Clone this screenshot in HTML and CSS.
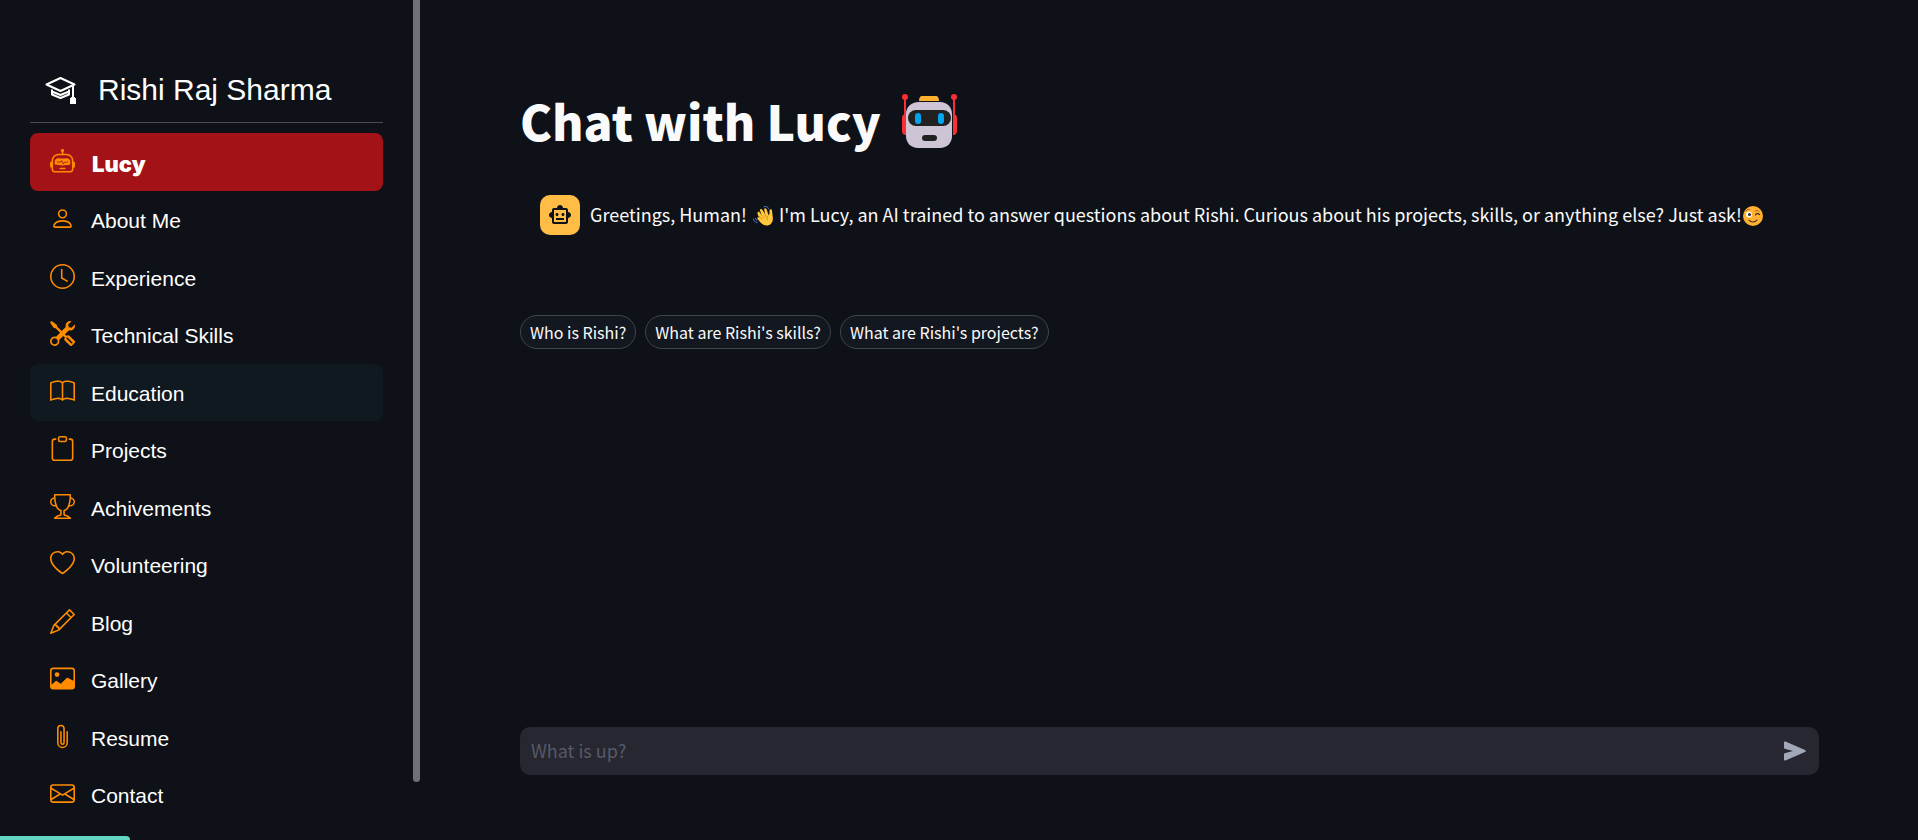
FILE: index.html
```html
<!DOCTYPE html>
<html lang="en">
<head>
<meta charset="utf-8">
<meta name="viewport" content="width=device-width, initial-scale=1">
<title>Chat with Lucy</title>
<link rel="stylesheet" href="styles.css">
</head>
<body>
<div class="app">
  <aside class="sidebar">
    <div class="sidebar-content">
      <header class="profile">
        <svg class="profile-icon" viewBox="0 0 31 31" aria-hidden="true">
          <g fill="none" stroke="currentColor" stroke-width="2" stroke-linejoin="round">
            <path d="M1.500 9.500 15.500 3 29.500 9.500 15.500 16z"/>
            <path d="M7 14.500v5l8.500 3.500 8.500-3.500v-5M7 16.500l8.500 3.500 8.500-3.500"/>
            <path d="M28 10v13"/>
          </g>
          <path fill="currentColor" d="M26 22h4v1h1v6h-6v-6h1z"/>
        </svg>
        <span class="profile-name">Rishi Raj Sharma</span>
      </header>
      <nav aria-label="Sections">
        <ul class="menu">
          <li><a class="menu-link active" href="#lucy" aria-current="page"><svg class="menu-icon" viewBox="0 0 16 16" aria-hidden="true"><path d="M6 12.500a.5.5 0 0 1 .5-.5h3a.5.5 0 0 1 0 1h-3a.5.5 0 0 1-.5-.5M3 8.062C3 6.760 4.235 5.765 5.530 5.886a26.600 26.600 0 0 0 4.940 0C11.765 5.765 13 6.760 13 8.062v1.157a.93.93 0 0 1-.765.935c-.845.147-2.340.346-4.235.346s-3.390-.2-4.235-.346A.93.93 0 0 1 3 9.219zm4.542-.827a.25.25 0 0 0-.217.068l-.92.9a25 25 0 0 1-1.871-.183.25.25 0 0 0-.068.495c.55.076 1.232.149 2.020.193a.25.25 0 0 0 .189-.071l.754-.736.847 1.710a.25.25 0 0 0 .404.062l.932-.97a25 25 0 0 0 1.922-.188.25.25 0 0 0-.068-.495c-.538.074-1.207.145-1.980.189a.25.25 0 0 0-.166.076l-.754.785-.842-1.700a.25.25 0 0 0-.182-.135"/><path d="M8.500 1.866a1 1 0 1 0-1 0V3h-2A4.500 4.500 0 0 0 1 7.500V8a1 1 0 0 0-1 1v2a1 1 0 0 0 1 1v1a2 2 0 0 0 2 2h10a2 2 0 0 0 2-2v-1a1 1 0 0 0 1-1V9a1 1 0 0 0-1-1v-.5A4.500 4.500 0 0 0 10.500 3h-2zM14 7.500V13a1 1 0 0 1-1 1H3a1 1 0 0 1-1-1V7.500A3.500 3.500 0 0 1 5.500 4h5A3.500 3.500 0 0 1 14 7.500"/></svg><span class="active-label">Lucy</span></a></li>
          <li><a class="menu-link" href="#about"><svg class="menu-icon" viewBox="0 0 16 16" aria-hidden="true"><path d="M8 8a3 3 0 1 0 0-6 3 3 0 0 0 0 6m2-3a2 2 0 1 1-4 0 2 2 0 0 1 4 0m4 8c0 1-1 1-1 1H3s-1 0-1-1 1-4 6-4 6 3 6 4m-1-.004c-.001-.246-.154-.986-.832-1.664C11.516 10.680 10.289 10 8 10s-3.516.68-4.168 1.332c-.678.678-.83 1.418-.832 1.664z"/></svg>About Me</a></li>
          <li><a class="menu-link" href="#experience"><svg class="menu-icon" viewBox="0 0 16 16" aria-hidden="true"><path d="M8 3.500a.5.5 0 0 0-1 0V9a.5.5 0 0 0 .252.434l3.500 2a.5.5 0 0 0 .496-.868L8 8.710z"/><path d="M8 16A8 8 0 1 0 8 0a8 8 0 0 0 0 16m7-8A7 7 0 1 1 1 8a7 7 0 0 1 14 0"/></svg>Experience</a></li>
          <li><a class="menu-link" href="#skills"><svg class="menu-icon" viewBox="0 0 16 16" aria-hidden="true"><path d="M1 0 0 1l2.200 3.081a1 1 0 0 0 .815.419h.07a1 1 0 0 1 .708.293l2.675 2.675-2.617 2.654A3.003 3.003 0 0 0 0 13a3 3 0 1 0 5.878-.851l2.654-2.617.968.968-.305.914a1 1 0 0 0 .242 1.023l3.270 3.270a.997.997 0 0 0 1.414 0l1.586-1.586a.997.997 0 0 0 0-1.414l-3.270-3.270a1 1 0 0 0-1.023-.242L10.500 9.500l-.96-.96 2.680-2.643A3.005 3.005 0 0 0 16 3q0-.405-.102-.777l-2.140 2.141L12 4l-.364-1.757L13.777.102a3 3 0 0 0-3.675 3.680L7.462 6.460 4.793 3.793a1 1 0 0 1-.293-.707v-.071a1 1 0 0 0-.419-.814zm9.646 10.646a.5.5 0 0 1 .708 0l2.914 2.915a.5.5 0 0 1-.707.707l-2.915-2.914a.5.5 0 0 1 0-.708M3 11l.471.242.529.026.287.445.445.287.026.529L5 13l-.242.471-.026.529-.445.287-.287.445-.529.026L3 15l-.471-.242L2 14.732l-.287-.445L1.268 14l-.026-.529L1 13l.242-.471.026-.529.445-.287.287-.445.529-.026z"/></svg>Technical Skills</a></li>
          <li><a class="menu-link hovered" href="#education"><svg class="menu-icon" viewBox="0 0 16 16" aria-hidden="true"><path d="M1 2.828c.885-.37 2.154-.769 3.388-.893 1.330-.134 2.458.063 3.112.752v9.746c-.935-.53-2.120-.603-3.213-.493-1.180.12-2.370.461-3.287.811zm7.500-.141c.654-.689 1.782-.886 3.112-.752 1.234.124 2.503.523 3.388.893v9.923c-.918-.35-2.107-.692-3.287-.81-1.094-.111-2.278-.039-3.213.492zM8 1.783C7.015.936 5.587.81 4.287.94c-1.514.153-3.042.672-3.994 1.105A.5.5 0 0 0 0 2.500v11a.5.5 0 0 0 .707.455c.882-.4 2.303-.881 3.680-1.020 1.409-.142 2.590.087 3.223.877a.5.5 0 0 0 .78 0c.633-.79 1.814-1.019 3.222-.877 1.378.139 2.800.62 3.681 1.020A.5.5 0 0 0 16 13.500v-11a.5.5 0 0 0-.293-.455c-.952-.433-2.480-.952-3.994-1.105C10.413.809 8.985.936 8 1.783"/></svg>Education</a></li>
          <li><a class="menu-link" href="#projects"><svg class="menu-icon" viewBox="0 0 16 16" aria-hidden="true"><path d="M4 1.500H3a2 2 0 0 0-2 2V14a2 2 0 0 0 2 2h10a2 2 0 0 0 2-2V3.500a2 2 0 0 0-2-2h-1v1h1a1 1 0 0 1 1 1V14a1 1 0 0 1-1 1H3a1 1 0 0 1-1-1V3.500a1 1 0 0 1 1-1h1z"/><path d="M9.500 1a.5.5 0 0 1 .5.5v1a.5.5 0 0 1-.5.5h-3a.5.5 0 0 1-.5-.5v-1a.5.5 0 0 1 .5-.5zm-3-1A1.500 1.500 0 0 0 5 1.500v1A1.500 1.500 0 0 0 6.500 4h3A1.500 1.500 0 0 0 11 2.500v-1A1.500 1.500 0 0 0 9.500 0z"/></svg>Projects</a></li>
          <li><a class="menu-link" href="#achievements"><svg class="menu-icon" viewBox="0 0 16 16" aria-hidden="true"><path d="M2.500.5A.5.5 0 0 1 3 0h10a.5.5 0 0 1 .5.5q0 .807-.034 1.536a3 3 0 1 1-1.133 5.890c-.79 1.865-1.878 2.777-2.833 3.011v2.173l1.425.356c.194.048.377.135.537.255L13.300 15.100a.5.5 0 0 1-.3.9H3a.5.5 0 0 1-.3-.9l1.838-1.379c.16-.12.343-.207.537-.255L6.500 13.110v-2.173c-.955-.234-2.043-1.146-2.833-3.012a3 3 0 1 1-1.132-5.890A33 33 0 0 1 2.500.5m.099 2.540a2 2 0 0 0 .72 3.935c-.333-1.050-.588-2.346-.72-3.935m10.083 3.935a2 2 0 0 0 .72-3.935c-.133 1.590-.388 2.885-.72 3.935M3.504 1q.01.775.056 1.469c.13 2.028.457 3.546.87 4.667C5.294 9.480 6.484 10 7 10a.5.5 0 0 1 .5.5v2.610a1 1 0 0 1-.757.97l-1.426.356a.5.5 0 0 0-.179.085L4.500 15h7l-.638-.479a.5.5 0 0 0-.18-.085l-1.425-.356a1 1 0 0 1-.757-.97V10.500A.5.5 0 0 1 9 10c.516 0 1.706-.52 2.570-2.864.413-1.120.74-2.640.87-4.667q.045-.694.056-1.469z"/></svg>Achivements</a></li>
          <li><a class="menu-link" href="#volunteering"><svg class="menu-icon" viewBox="0 0 16 16" aria-hidden="true"><path d="m8 2.748-.717-.737C5.600.281 2.514.878 1.400 3.053c-.523 1.023-.641 2.500.314 4.385.92 1.815 2.834 3.989 6.286 6.357 3.452-2.368 5.365-4.542 6.286-6.357.955-1.886.838-3.362.314-4.385C13.486.878 10.400.28 8.717 2.010zM8 15C-7.333 4.868 3.279-3.040 7.824 1.143q.09.083.176.171a3 3 0 0 1 .176-.17C12.720-3.042 23.333 4.867 8 15"/></svg>Volunteering</a></li>
          <li><a class="menu-link" href="#blog"><svg class="menu-icon" viewBox="0 0 16 16" aria-hidden="true"><path d="M12.146.146a.5.5 0 0 1 .708 0l3 3a.5.5 0 0 1 0 .708l-10 10a.5.5 0 0 1-.168.11l-5 2a.5.5 0 0 1-.65-.65l2-5a.5.5 0 0 1 .11-.168zM11.207 2.500 13.500 4.793 14.793 3.500 12.500 1.207zm1.586 3L10.500 3.207 4 9.707V10h.5a.5.5 0 0 1 .5.5v.5h.5a.5.5 0 0 1 .5.5v.5h.293zm-9.761 5.175-.106.106-1.528 3.821 3.821-1.528.106-.106A.5.5 0 0 1 5 12.500V12h-.5a.5.5 0 0 1-.5-.5V11h-.5a.5.5 0 0 1-.468-.325"/></svg>Blog</a></li>
          <li><a class="menu-link" href="#gallery"><svg class="menu-icon" viewBox="0 0 16 16" aria-hidden="true"><path d="M6.002 5.500a1.500 1.500 0 1 1-3 0 1.500 1.500 0 0 1 3 0"/><path d="M2.002 1a2 2 0 0 0-2 2v10a2 2 0 0 0 2 2h12a2 2 0 0 0 2-2V3a2 2 0 0 0-2-2zm12 1a1 1 0 0 1 1 1v6.500l-3.777-1.947a.5.5 0 0 0-.577.093l-3.710 3.710-2.660-1.772a.5.5 0 0 0-.63.062L1.002 12V3a1 1 0 0 1 1-1z"/></svg>Gallery</a></li>
          <li><a class="menu-link" href="#resume"><svg class="menu-icon" viewBox="0 0 16 16" aria-hidden="true"><path d="M4.500 3a2.500 2.500 0 0 1 5 0v9a1.500 1.500 0 0 1-3 0V5a.5.5 0 0 1 1 0v7a.5.5 0 0 0 1 0V3a1.500 1.500 0 1 0-3 0v9a2.500 2.500 0 0 0 5 0V5a.5.5 0 0 1 1 0v7a3.500 3.500 0 1 1-7 0z"/></svg>Resume</a></li>
          <li><a class="menu-link" href="#contact"><svg class="menu-icon" viewBox="0 0 16 16" aria-hidden="true"><path d="M0 4a2 2 0 0 1 2-2h12a2 2 0 0 1 2 2v8a2 2 0 0 1-2 2H2a2 2 0 0 1-2-2zm2-1a1 1 0 0 0-1 1v.217l7 4.200 7-4.200V4a1 1 0 0 0-1-1zm13 2.383-4.708 2.825L15 11.105zm-.034 6.876-5.640-3.471L8 9.583l-1.326-.795-5.640 3.470A1 1 0 0 0 2 13h12a1 1 0 0 0 .966-.741M1 11.114l4.708-2.897L1 5.383z"/></svg>Contact</a></li>
        </ul>
      </nav>
    </div>
    <div class="scroll-thumb"></div>
  </aside>

  <main class="chat">
    <h1 class="chat-title">Chat with Lucy
      <svg class="title-robot" viewBox="0 0 56 56" role="img" aria-label="robot">
        <g fill="#f92f34">
          <rect x="2" y="3" width="2" height="22"/><rect x="51" y="3" width="2" height="22"/>
          <circle cx="3" cy="3" r="3"/><circle cx="52" cy="3" r="3"/>
          <path d="M4 20v21c-3 0-4-2-4-4V24c0-2 1-4 4-4zM51 20v21c3 0 4-2 4-4V24c0-2-1-4-4-4z"/>
        </g>
        <path fill="#ffb02e" d="M20 2h14c2 0 3 2 3 5H17c0-3 1-5 3-5z"/>
        <path fill="#cdc4d6" d="M17 8h21c7 0 12 5 12 12v22c0 7-5 12-12 12H16C9 54 4 49 4 42V20C4 13 9 8 17 8z"/>
        <rect x="6" y="16" width="43" height="16" rx="8" fill="#212121"/>
        <rect x="13" y="19" width="6" height="11" rx="3" fill="#00a6ed"/>
        <rect x="36" y="19" width="6" height="11" rx="3" fill="#00a6ed"/>
        <rect x="20" y="41" width="15" height="6" rx="3" fill="#212121"/>
      </svg>
    </h1>

    <article class="message">
      <div class="avatar">
        <svg class="avatar-icon" viewBox="0 0 24 24" aria-hidden="true"><path fill-rule="evenodd" d="M20 9V7c0-1.100-.9-2-2-2h-3c0-1.660-1.340-3-3-3S9 3.340 9 5H6c-1.100 0-2 .9-2 2v2c-1.660 0-3 1.340-3 3s1.340 3 3 3v4c0 1.100.9 2 2 2h12c1.100 0 2-.9 2-2v-4c1.660 0 3-1.340 3-3s-1.340-3-3-3zm-2 10H6V7h12v12zm-9-6c-.83 0-1.500-.67-1.500-1.500S8.170 10 9 10s1.500.67 1.500 1.500S9.830 13 9 13zm7.500-1.500c0 .83-.67 1.500-1.500 1.500s-1.500-.67-1.500-1.500.67-1.500 1.500-1.500 1.500.67 1.500 1.500zM8 15h8v2H8v-2z"/></svg>
      </div>
      <p class="message-text">Greetings, Human! <svg class="emoji wave" viewBox="0 0 20 20" role="img" aria-label="waving hand">
          <path fill="#ffc83d" d="M5 9.500 4.500 7c-.3-1.200 1.200-1.800 2-.8L8.500 9 7 4.500C6.600 3 8.500 2.300 9.200 3.600L12 8l-.8-4.500c-.2-1.500 1.700-1.900 2.300-.4L15.500 9l1-1 0-3.500c.2-1.600 2.200-1.500 2.500 0l.7 6c.8 5-1.500 8.500-5.200 9-3 .4-5-1-7-3l-3-3.500c-.8-1.200.5-2.400 1.800-1.500z"/>
          <path fill="none" stroke="#d67d00" stroke-width=".7" stroke-linecap="round" d="m6 10 3 3.500M8.500 9l2.500 3M12 8l1 3M15.500 9c-1.500 1.500-1.800 3-1 5"/>
          <path fill="none" stroke="#4a77d4" stroke-width="1" stroke-linecap="round" d="M11 .7c2-.7 4 .1 4.700 1.800M.5 13c0 2 1.500 3.500 3.500 3.600M2.500 12.500c0 1 .6 1.600 1.500 1.700"/>
        </svg> I'm Lucy, an AI trained to answer questions about Rishi. Curious about his projects, skills, or anything else? Just ask!<svg class="emoji" viewBox="0 0 20 20" role="img" aria-label="winking face">
          <circle cx="10" cy="10" r="10" fill="#ffb02e"/>
          <circle cx="6" cy="8.500" r="3" fill="#fff"/><circle cx="6.500" cy="8.500" r="1.600" fill="#402a32"/>
          <path fill="none" stroke="#402a32" stroke-width="1.100" stroke-linecap="round" d="M12.500 9c.5-1.600 3-1.900 4-.4M6 14c2 2.600 6 2.600 8 0"/>
          <path fill="none" stroke="#9a5b2a" stroke-width="1" stroke-linecap="round" d="M3 5C3.500 3.700 5 3.100 6.300 3.500M12.500 5c1.200-.8 2.800-.5 3.500.6"/>
        </svg></p>
    </article>

    <div class="suggestions">
      <button class="chip" type="button">Who is Rishi?</button>
      <button class="chip" type="button">What are Rishi's skills?</button>
      <button class="chip" type="button">What are Rishi's projects?</button>
    </div>

    <form class="composer">
      <input class="composer-input" type="text" placeholder="What is up?" aria-label="Message">
      <button class="send" type="button" aria-label="Send">
        <svg class="send-icon" viewBox="0 0 24 20" aria-hidden="true"><path d="M1 1.500C1 .5 1.700.2 2.500.6L22 9c1 .5 1 1.500 0 2L2.500 19.400C1.700 19.800 1 19.500 1 18.500V13.500C1 12.500 1.500 12.200 2.500 12L10 10 2.500 8C1.500 7.800 1 7.500 1 6.500z"/></svg>
      </button>
    </form>
  </main>
</div>
<div class="status-bar"></div>
</body>
</html>
```
FILE: styles.css
```css
* {
  box-sizing: border-box;
}

body {
  margin: 0;
  background: #0e1117;
  color: #fafafa;
  font-family: "Noto Sans CJK SC", "Noto Sans", sans-serif;
  font-size: 18px;
}

.app {
  display: flex;
  height: 100vh;
  overflow: hidden;
}

.sidebar {
  display: flex;
  flex: 0 0 420px;
  gap: 30px;
  padding-left: 30px;
  color: #fff;
  font-family: "Liberation Sans", Arial, sans-serif;
}

.sidebar-content {
  flex: 1;
  padding-top: 67px;
}

.scroll-thumb {
  width: 7px;
  height: calc(100% - 58px);
  border-radius: 0 0 4px 4px;
  background: #707175;
}

.profile {
  display: flex;
  align-items: center;
  gap: 22px;
  margin-bottom: 10px;
  padding: 0 15px 9px;
  border-bottom: 1px solid #4b4d52;
}

.profile-icon {
  width: 31px;
  height: 31px;
}

.profile-name {
  font-size: 30px;
  line-height: 46px;
}

.menu {
  margin: 0;
  padding: 0;
  list-style: none;
}

.menu-link {
  display: flex;
  align-items: center;
  gap: 16px;
  padding: 14px 20px 12px;
  border-radius: 8px;
  color: #fff;
  font-size: 21px;
  line-height: 1.5;
  text-decoration: none;
}

.menu-link.active {
  padding: 16px 20px 13px;
  background: #a31216;
}

.active-label {
  padding: 1px 0 0 1px;
  font-family: Inter, "Liberation Sans", sans-serif;
  font-size: 22px;
  font-weight: 900;
  line-height: 1;
}

.menu-link.hovered,
.menu-link:not(.active):hover {
  background: #101820;
}

.menu-icon {
  width: 25px;
  height: 25px;
  margin-bottom: 4px;
  fill: #ff8c00;
}

.chat {
  display: flex;
  flex: 1;
  flex-direction: column;
  min-width: 0;
  padding: 87px 99px 65px 100px;
}

.chat-title {
  display: flex;
  align-items: center;
  gap: 21px;
  margin: 0;
  font-size: 48px;
  font-weight: 900;
  line-height: 66px;
}

.title-robot {
  width: 56px;
  height: 56px;
  margin-top: 4px;
  overflow: visible;
}

.message {
  display: flex;
  gap: 10px;
  margin-top: 42px;
  padding: 0 20px;
}

.avatar {
  display: grid;
  flex: 0 0 40px;
  height: 40px;
  place-items: center;
  border-radius: 10px;
  background: #ffbd45;
}

.avatar-icon {
  width: 24px;
  height: 24px;
  fill: #0e1117;
}

.message-text {
  margin: 0;
  line-height: 38px;
}

.emoji {
  width: 20px;
  height: 20px;
  margin-left: 1px;
  vertical-align: -4px;
}

.emoji.wave {
  margin: 0 2px;
}

.suggestions {
  display: flex;
  flex-wrap: wrap;
  gap: 9px;
  margin-top: 80px;
}

.chip {
  height: 34px;
  padding: 0 9px 1px;
  border: 1px solid #41444c;
  border-radius: 17px;
  background: #131720;
  color: #fafafa;
  font-family: inherit;
  font-size: 16px;
}

.composer {
  display: flex;
  align-items: center;
  height: 48px;
  margin-top: auto;
  padding: 0 10px;
  border-radius: 10px;
  background: #262730;
}

.composer-input {
  flex: 1;
  min-width: 0;
  padding: 0 0 2px 1px;
  border: 0;
  outline: 0;
  background: transparent;
  color: #fafafa;
  font-family: inherit;
  font-size: 18px;
}

.composer-input::placeholder {
  color: #555a68;
  opacity: 1;
}

.send {
  display: grid;
  padding: 0 2px;
  border: 0;
  background: transparent;
}

.send-icon {
  width: 24px;
  height: 20px;
  fill: #a3a8b8;
}

.status-bar {
  position: fixed;
  bottom: 0;
  left: 0;
  width: 130px;
  height: 4px;
  border-top-right-radius: 4px;
  background: #62d5c4;
}
```
